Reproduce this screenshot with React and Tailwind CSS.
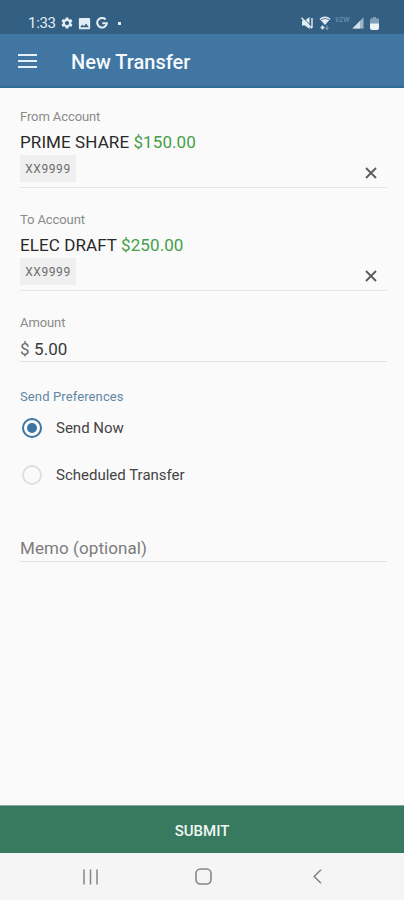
import { useState } from "react";
import { MdSettings, MdImage } from "react-icons/md";

function StatusBar() {
  return (
    <div className="flex h-[34px] items-end justify-between bg-[#335f83] pl-[28px] pr-[25px] text-[#e3edf4]">
      <div className="flex h-[22px] items-center">
        <span className="w-[28px] whitespace-nowrap text-[15px] tracking-[-0.3px]">1:33</span>
        <MdSettings className="ml-[4px]" size={14} />
        <MdImage className="ml-[3px]" size={15} />
        {/* google logo */}
        <svg className="ml-[4px]" width="12" height="12" viewBox="0 0 12 12" fill="none">
          <path d="M9.6 2.5A4.8 4.8 0 1 0 10.8 6.3H6.3" stroke="currentColor" strokeWidth="2" />
        </svg>
        <span className="ml-[10px] size-[3px] bg-[#e3edf4]" />
      </div>
      <div className="flex h-[22px] items-center">
        {/* muted speaker */}
        <svg width="12" height="12" viewBox="0 0 12 12" fill="none">
          <path d="M1 3.5h3L8.5 0v12L4 8.5H1z" fill="currentColor" />
          <path d="M2.3 .8l9 9.4" stroke="#335f83" strokeWidth="1" />
          <path d="M.5 .8l10.3 10.4M11 1v10" stroke="currentColor" strokeWidth="1.4" />
        </svg>
        {/* wifi with data arrows */}
        <svg className="ml-[6px]" width="12" height="14" viewBox="0 0 12 14" fill="none">
          <path d="M.5 2.8Q6-1.6 11.5 2.8L6 9z" fill="currentColor" />
          <path d="M2 3.6Q6 1.2 10 3.6" stroke="#335f83" strokeWidth=".8" />
          <path d="M3.5 13.5v-4M1.5 11.5h4" stroke="currentColor" strokeWidth="1.5" />
          <path d="M8 9.5v4M6.4 11.8L8 13.5l1.6-1.7" stroke="#8fb0c8" strokeWidth="1" />
        </svg>
        <span className="mb-[5px] ml-[4px] w-[15px] text-[7px] italic leading-none text-[#7c9db8]">VZW</span>
        <svg className="ml-[2px]" width="12" height="12" viewBox="0 0 12 12">
          <path d="M11.5.5v11H.5z" fill="#9cb6c9" />
          <path d="M8 4v7.5H.5z" fill="#d6e2eb" />
        </svg>
        <svg className="ml-[6px]" width="9" height="13" viewBox="0 0 9 13">
          <path d="M3 0h3v1.2h1.5Q9 1.2 9 3v4H0V3q0-1.8 1.5-1.8H3z" fill="#819fb7" />
          <path d="M0 6.5h9V11q0 2-2 2H2q-2 0-2-2z" fill="#edf4f8" />
        </svg>
      </div>
    </div>
  );
}

function Header() {
  return (
    <header className="flex h-[54px] items-center border-b-2 border-[#2b6d93] bg-[#4176a3] pl-[18px] text-white">
      <button aria-label="Open Menu" className="mt-[2px] flex w-[19px] flex-col gap-[4px]">
        <span className="h-[2px] w-full bg-[#e6eff5]" />
        <span className="h-[2px] w-full bg-[#e6eff5]" />
        <span className="h-[2px] w-full bg-[#e6eff5]" />
      </button>
      <h1 className="ml-[34px] pt-[4px] text-[20px] font-medium leading-6 text-[#f4f9fc]">New Transfer</h1>
    </header>
  );
}

function AccountField({ label, name, balance, number }) {
  return (
    <div className="mb-[20px] h-[83px] border-b border-[#e6e6e6]">
      <div className="h-[24px] text-[13px] leading-[23px] tracking-[-0.1px] text-[#8b8b8b]">{label}</div>
      <div className="h-[26px] whitespace-nowrap text-[17px] leading-[27px] tracking-[0.09px] text-[#292929]">
        {name} <span className="text-[#43a047]">{balance}</span>
      </div>
      <div className="flex items-center justify-between">
        <span className="h-[27px] w-[56px] bg-[#efefef] text-center text-[12px] leading-[28px] tracking-[0.6px] text-[#6d6d6d]">
          {number}
        </span>
        <button aria-label="Clear" className="mr-[10px] mt-[9px] text-[#5c5c5c]">
          <svg width="12" height="12" viewBox="0 0 12 12" stroke="currentColor" strokeWidth="1.9">
            <path d="M1 1l10 10M11 1L1 11" />
          </svg>
        </button>
      </div>
    </div>
  );
}

function RadioOption({ label, checked, onSelect }) {
  return (
    <button
      role="radio"
      aria-checked={checked}
      onClick={onSelect}
      className="flex h-[47px] items-center text-[15px] text-[#444444]"
    >
      <span
        className={
          checked
            ? "ml-[2px] flex size-[20px] items-center justify-center rounded-full border-2 border-[#3b75a4]"
            : "ml-[2px] flex size-[20px] items-center justify-center rounded-full border-2 border-[#dedede]"
        }
      >
        {checked && <span className="size-[10px] rounded-full bg-[#3b75a4]" />}
      </span>
      <span className="ml-[14px] pt-[2px]">{label}</span>
    </button>
  );
}

export default function App() {
  const [when, setWhen] = useState("now");

  return (
    <div className="flex h-[900px] w-[404px] flex-col bg-[#fafafa] font-['Roboto',sans-serif]">
      <StatusBar />
      <Header />

      <main className="flex-1 pl-[20px] pr-[17px] pt-[17px]">
        <AccountField label="From Account" name="PRIME SHARE" balance="$150.00" number="XX9999" />
        <AccountField label="To Account" name="ELEC DRAFT" balance="$250.00" number="XX9999" />

        <div className="h-[51px] border-b border-[#e2e2e2]">
          <div className="h-[24px] text-[13px] leading-[24px] tracking-[-0.1px] text-[#8b8b8b]">Amount</div>
          <div className="text-[17px] leading-[29px] tracking-[0.1px] text-[#3a3a3a]">
            <span className="text-[#6a6a6a]">$</span> 5.00
          </div>
        </div>

        <div className="mt-[22px] h-[24px] text-[13px] leading-[25px] tracking-[0.12px] text-[#6088a6]">
          Send Preferences
        </div>
        <div role="radiogroup" className="-mt-[4px] flex flex-col">
          <RadioOption label="Send Now" checked={when === "now"} onSelect={() => setWhen("now")} />
          <RadioOption
            label="Scheduled Transfer"
            checked={when === "scheduled"}
            onSelect={() => setWhen("scheduled")}
          />
        </div>

        <div className="mt-[35px] h-[29px] border-b border-[#e2e2e2] text-[17px] leading-[30px] tracking-[0.08px] text-[#7c7c7c]">
          Memo (optional)
        </div>
      </main>

      <button className="h-[48px] border-t border-[#8aa89b] bg-[#377a5f] pt-[3px] text-[15px] font-medium text-[#eff7f3]">
        SUBMIT
      </button>

      {/* Android navigation */}
      <nav className="flex h-[47px] items-center bg-[#f5f5f5] text-[#858585]">
        <svg className="ml-[83px]" width="15" height="16" viewBox="0 0 15 16" stroke="currentColor" strokeWidth="1.5">
          <path d="M1 .5v15M7.5 .5v15M14 .5v15" />
        </svg>
        <svg className="ml-[97px]" width="17" height="17" viewBox="0 0 17 17" fill="none" stroke="currentColor" strokeWidth="1.6">
          <rect x="1" y="1" width="15" height="15" rx="4.5" />
        </svg>
        <svg
          className="ml-[101px]"
          width="9"
          height="15"
          viewBox="0 0 9 15"
          fill="none"
          stroke="currentColor"
          strokeWidth="1.6"
        >
          <path d="M8 .8L1.2 7.5 8 14.2" />
        </svg>
      </nav>
    </div>
  );
}
